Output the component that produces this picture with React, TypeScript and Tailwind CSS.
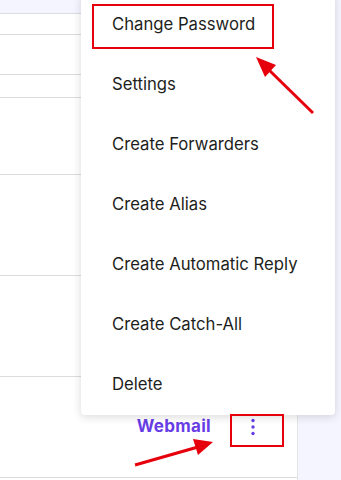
import React from 'react';

const menuItems = [
  'Change Password',
  'Settings',
  'Create Forwarders',
  'Create Alias',
  'Create Automatic Reply',
  'Create Catch-All',
  'Delete',
];

function DotsIcon() {
  return (
    <svg width="6" height="20" viewBox="0 0 6 20" className="text-[#673de6]">
      <circle cx="3" cy="3.5" r="1.7" fill="currentColor" />
      <circle cx="3" cy="10" r="1.7" fill="currentColor" />
      <circle cx="3" cy="16.5" r="1.7" fill="currentColor" />
    </svg>
  );
}

export default function App() {
  return (
    <div className="relative w-[341px] h-[480px] overflow-hidden bg-[#f4f5ff] font-['Inter',sans-serif]">
      <div className="flex h-full">
        {/* table card */}
        <div className="w-[298px] h-full bg-white border-r border-[#e3e4e8] flex flex-col">
          <div className="h-[14px] bg-[#f4f5ff] border-b border-[#dadce0]" />
          <div className="h-[21px] border-b border-[#dadce0]" />
          <div className="h-[40px] border-b border-[#dadce0]" />
          <div className="h-[23px] border-b border-[#dadce0]" />
          <div className="h-[77px] border-b border-[#dadce0]" />
          <div className="h-[101px] border-b border-[#dadce0]" />
          <div className="h-[101px] border-b border-[#dadce0]" />
          <div className="h-[101px] border-b border-[#dadce0] flex items-center justify-end pr-[24px]">
            <span className="text-[17px] font-bold tracking-[0.3px] text-[#673de6] mr-[22px]">Webmail</span>
            <button className="w-[40px] h-[32px] flex items-center justify-center">
              <DotsIcon />
            </button>
          </div>
        </div>
      </div>

      {/* dropdown menu */}
      <div className="absolute left-[81px] top-[-5px] w-[254px] bg-white rounded-[4px] shadow-[0_2px_8px_rgba(29,30,32,0.16)]">
        {menuItems.map((item) => (
          <div key={item} className="h-[60px] flex items-center pl-[31px] text-[16.7px] text-[#1d1e20]">
            {item}
          </div>
        ))}
      </div>

      {/* annotation boxes */}
      <div className="absolute left-[92px] top-[4px] w-[182px] h-[45px] border-[2px] border-[#e5000b]" />
      <div className="absolute left-[230px] top-[414px] w-[54px] h-[33px] border-[2px] border-[#e5000b]" />

      {/* annotation arrows */}
      <svg className="absolute inset-0 pointer-events-none" width="341" height="480">
        <line x1="313" y1="113" x2="268" y2="69" stroke="#e5000b" strokeWidth="3" />
        <polygon points="256,57 276,65 265,77" fill="#e5000b" />
        <line x1="135" y1="465" x2="198" y2="447" stroke="#e5000b" strokeWidth="3" />
        <polygon points="213,442 198,455 193,439" fill="#e5000b" />
      </svg>
    </div>
  );
}
